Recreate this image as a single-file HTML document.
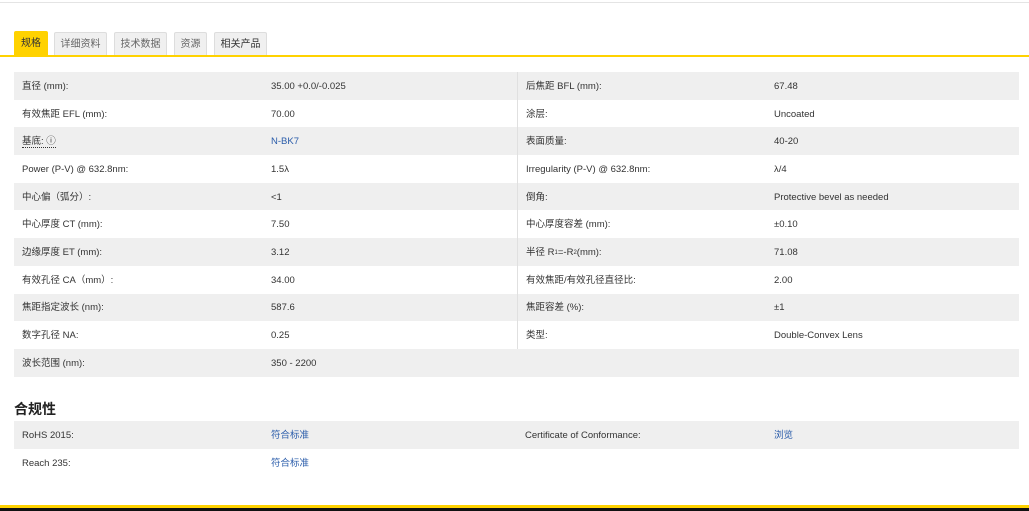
<!DOCTYPE html>
<html><head><meta charset="utf-8"><style>
*{margin:0;padding:0;box-sizing:border-box}
body{width:1029px;height:511px;background:#fff;font-family:"Liberation Sans","Noto Sans CJK SC",sans-serif;color:#333;font-size:10px;position:relative;overflow:hidden}
.top{position:absolute;left:0;top:2px;width:1029px;height:1px;background:#e4e4e4}
.tab{position:absolute;top:32px;height:24px;background:#f0f0f0;border:1px solid #ddd;border-bottom:none;font-size:10px;line-height:24px;text-align:center;color:#666;border-radius:2px 2px 0 0}
.tab.a{background:#ffd200;border-color:#ffd200;color:#333;top:31px;height:25px}
.yl{position:absolute;left:0;top:55px;width:1029px;height:2px;background:#ffd200}
.t{position:absolute;left:14px;width:1005px}
.r{height:27.7px;display:flex;align-items:center;font-size:9.5px;line-height:12px;padding-top:2px}
.r:nth-child(odd){background:#efefef}
.r div{padding-left:8px;white-space:nowrap}
.c1{width:249px}.c2{width:254px}.c3{width:249px;border-left:1px solid #e0e0e0;align-self:stretch;display:flex;align-items:center;margin-top:-2px;padding-top:2px}
a{color:#2a5caa;text-decoration:none}
h3{position:absolute;left:14px;top:399px;font-size:14px;font-weight:bold;color:#222}
.bot{position:absolute;left:0;top:505px;width:1029px;height:3px;background:#ffd200}
.blk{position:absolute;left:0;top:508px;width:1029px;height:3px;background:#111}
u{text-decoration:none;border-bottom:1px dotted #333}
sub{font-size:6px;line-height:0}
</style></head><body>
<div class="top"></div>
<div class="tab a" style="left:14px;width:34px">规格</div>
<div class="tab" style="left:54px;width:53px">详细资料</div>
<div class="tab" style="left:114px;width:53px">技术数据</div>
<div class="tab" style="left:174px;width:33px">资源</div>
<div class="tab" style="left:214px;width:53px;color:#333">相关产品</div>
<div class="yl"></div>
<div class="t" style="top:72px">
<div class="r"><div class="c1">直径 (mm):</div><div class="c2">35.00 +0.0/-0.025</div><div class="c3">后焦距 BFL (mm):</div><div>67.48</div></div>
<div class="r"><div class="c1">有效焦距 EFL (mm):</div><div class="c2">70.00</div><div class="c3">涂层:</div><div>Uncoated</div></div>
<div class="r"><div class="c1"><u>基底: ⓘ</u></div><div class="c2"><a>N-BK7</a></div><div class="c3">表面质量:</div><div>40-20</div></div>
<div class="r"><div class="c1">Power (P-V) @ 632.8nm:</div><div class="c2">1.5λ</div><div class="c3">Irregularity (P-V) @ 632.8nm:</div><div>λ/4</div></div>
<div class="r"><div class="c1">中心偏（弧分）:</div><div class="c2">&lt;1</div><div class="c3">倒角:</div><div>Protective bevel as needed</div></div>
<div class="r"><div class="c1">中心厚度 CT (mm):</div><div class="c2">7.50</div><div class="c3">中心厚度容差 (mm):</div><div>±0.10</div></div>
<div class="r"><div class="c1">边缘厚度 ET (mm):</div><div class="c2">3.12</div><div class="c3">半径 R<sub>1</sub>=-R<sub>2</sub> (mm):</div><div>71.08</div></div>
<div class="r"><div class="c1">有效孔径 CA（mm）:</div><div class="c2">34.00</div><div class="c3">有效焦距/有效孔径直径比:</div><div>2.00</div></div>
<div class="r"><div class="c1">焦距指定波长 (nm):</div><div class="c2">587.6</div><div class="c3">焦距容差 (%):</div><div>±1</div></div>
<div class="r"><div class="c1">数字孔径 NA:</div><div class="c2">0.25</div><div class="c3">类型:</div><div>Double-Convex Lens</div></div>
<div class="r"><div class="c1">波长范围 (nm):</div><div class="c2">350 - 2200</div></div>
</div>
<h3>合规性</h3>
<div class="t" style="top:421px">
<div class="r"><div class="c1">RoHS 2015:</div><div class="c2"><a>符合标准</a></div><div class="c3" style="border:none">Certificate of Conformance:</div><div><a>浏览</a></div></div>
<div class="r"><div class="c1">Reach 235:</div><div class="c2"><a>符合标准</a></div></div>
</div>
<div class="bot"></div><div class="blk"></div>
</body></html>
